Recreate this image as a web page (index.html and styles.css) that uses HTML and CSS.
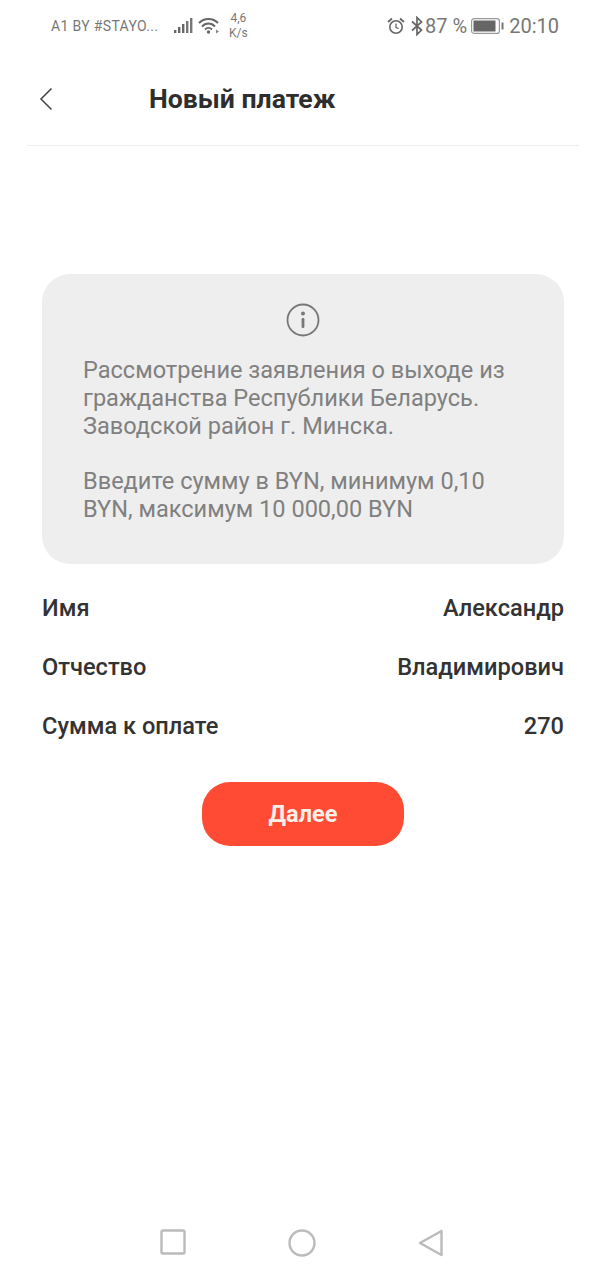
FILE: index.html
```html
<!DOCTYPE html>
<html>
<head>
    <title>Новый платеж</title>
    <link rel="stylesheet" href="styles.css">
</head>
<body>
    <div class="page">
        <div class="status-bar">
            <div class="status-left">
                <span class="carrier">A1 BY #STAYO...</span>
                <svg class="signal" width="20" height="18" viewBox="0 0 20 18">
                    <rect x="0" y="13" width="2.4" height="3" fill="#666"/>
                    <rect x="4" y="10" width="2.4" height="6" fill="#666"/>
                    <rect x="8" y="7" width="2.4" height="9" fill="#666"/>
                    <rect x="12" y="4" width="2.4" height="12" fill="#777"/>
                    <rect x="16" y="1" width="2.4" height="15" fill="#777"/>
                </svg>
                <svg class="wifi" width="22" height="18" viewBox="0 0 22 18">
                    <path d="M1 6 C6 0.500 15 0.500 20 6" fill="none" stroke="#666" stroke-width="2"/>
                    <path d="M4 9.500 C7.500 5.500 13.500 5.500 17 9.500" fill="none" stroke="#666" stroke-width="2"/>
                    <path d="M7 12.500 C9 10.500 12 10.500 14 12.500" fill="none" stroke="#666" stroke-width="1.800"/>
                    <circle cx="10.500" cy="15" r="1.700" fill="#666"/>
                    <path d="M18 12.500 L21 14.500 L18 16.500 Z" fill="#888"/>
                </svg>
                <span class="speed">4,6<br>K/s</span>
            </div>
            <div class="status-right">
                <svg class="alarm" width="18" height="18" viewBox="0 0 18 18">
                    <circle cx="9" cy="10" r="6.200" fill="none" stroke="#666" stroke-width="1.600"/>
                    <path d="M9 6.500 V10.300 L11.500 11.800" fill="none" stroke="#666" stroke-width="1.300"/>
                    <path d="M1 5 L5 1.500 M17 5 L13 1.500" fill="none" stroke="#666" stroke-width="1.800"/>
                </svg>
                <svg class="bt" width="14" height="20" viewBox="0 0 14 20">
                    <path d="M2 5.500 L11.500 14 L7 18.500 V1.500 L11.500 6 L2 14.500" fill="none" stroke="#666" stroke-width="1.700"/>
                </svg>
                <span class="battery-pct">87 %</span>
                <svg class="battery" width="33" height="16" viewBox="0 0 33 16">
                    <rect x="0.600" y="0.600" width="27.800" height="14.800" rx="2.500" fill="none" stroke="#999" stroke-width="1.200"/>
                    <rect x="2.500" y="2.500" width="22" height="11" fill="#666"/>
                    <rect x="30.500" y="4.500" width="2" height="7" fill="#777"/>
                </svg>
                <span class="clock">20:10</span>
            </div>
        </div>

        <div class="header">
            <svg class="back" width="14" height="24" viewBox="0 0 14 24">
                <path d="M12.500 1.500 L2 12 L12.500 22.500" fill="none" stroke="#444" stroke-width="1.500"/>
            </svg>
            <h1 class="title">Новый платеж</h1>
        </div>

        <div class="content">
            <div class="info-card">
                <svg class="info-icon" width="34" height="34" viewBox="0 0 34 34">
                    <circle cx="17" cy="17" r="15.500" fill="none" stroke="#777" stroke-width="1.800"/>
                    <circle cx="17" cy="10.500" r="2" fill="#777"/>
                    <rect x="15.600" y="15" width="2.800" height="10" rx="1.200" fill="#777"/>
                </svg>
                <p class="info-text">Рассмотрение заявления о выходе из гражданства Республики Беларусь. Заводской район г. Минска.</p>
                <p class="info-text">Введите сумму в BYN, минимум 0,10 BYN, максимум 10 000,00 BYN</p>
            </div>

            <div class="rows">
                <div class="row"><span>Имя</span><span>Александр</span></div>
                <div class="row"><span>Отчество</span><span>Владимирович</span></div>
                <div class="row"><span>Сумма к оплате</span><span>270</span></div>
            </div>

            <button class="next-btn" type="button">Далее</button>
        </div>

        <div class="nav-bar">
            <svg width="26" height="26" viewBox="0 0 26 26">
                <rect x="1.500" y="1.500" width="23" height="23" rx="1.500" fill="none" stroke="#bbb" stroke-width="2.400"/>
            </svg>
            <svg width="28" height="28" viewBox="0 0 28 28">
                <circle cx="14" cy="14" r="12.500" fill="none" stroke="#bbb" stroke-width="2.400"/>
            </svg>
            <svg width="26" height="28" viewBox="0 0 26 28">
                <path d="M23.500 2 V26 L2 14 Z" fill="none" stroke="#bbb" stroke-width="2.400" stroke-linejoin="round"/>
            </svg>
        </div>
    </div>
</body>
</html>
```

FILE: styles.css
```css
body { margin: 0; background: #fff; font-family: Roboto, "Liberation Sans", sans-serif; color: #333; }
.page { height: 1280px; display: flex; flex-direction: column; }

.status-bar { height: 52px; display: flex; justify-content: space-between; align-items: center; padding: 0 47px 0 51px; color: #777; }
.status-left, .status-right { display: flex; align-items: center; }
.carrier { font-size: 14px; letter-spacing: 0.35px; width: 123px; white-space: nowrap; }
.wifi { margin-left: 4px; }
.speed { font-size: 12px; line-height: 15px; text-align: center; margin-left: 9px; }
.bt { margin-left: 5px; }
.battery-pct { font-size: 20px; margin-left: 1px; }
.battery { margin-left: 4px; }
.clock { font-size: 20px; margin-left: 5px; }

.header { height: 94px; margin: 0 27px; border-bottom: 1px solid #eee; display: flex; align-items: center; padding-left: 12px; box-sizing: border-box; }
.back { margin-right: 96px; }
.title { margin: 0; font-size: 26.6px; font-weight: 700; color: #2e2e2e; white-space: nowrap; }

.content { padding: 128px 42px 0; display: flex; flex-direction: column; }
.info-card { height: 290px; box-sizing: border-box; background: #eee; border-radius: 28px; padding: 29px 41px 0; display: flex; flex-direction: column; }
.info-icon { align-self: center; margin-bottom: 19px; }
.info-text { margin: 0 0 27px; font-size: 23.55px; line-height: 28px; color: #808080; }

.rows { margin-top: 14px; }
.row { height: 59px; display: flex; justify-content: space-between; align-items: center; font-size: 23.6px; font-weight: 500; color: #333; }

.next-btn { align-self: center; width: 202px; height: 64px; margin-top: 27px; border: none; border-radius: 28px; background: #ff4b33; color: #fdeee8; font-family: Roboto, "Liberation Sans", sans-serif; font-size: 23.5px; font-weight: 700; }

.nav-bar { margin-top: auto; height: 51px; padding: 0 162px 0 160px; display: flex; justify-content: space-between; align-items: flex-start; }
```
